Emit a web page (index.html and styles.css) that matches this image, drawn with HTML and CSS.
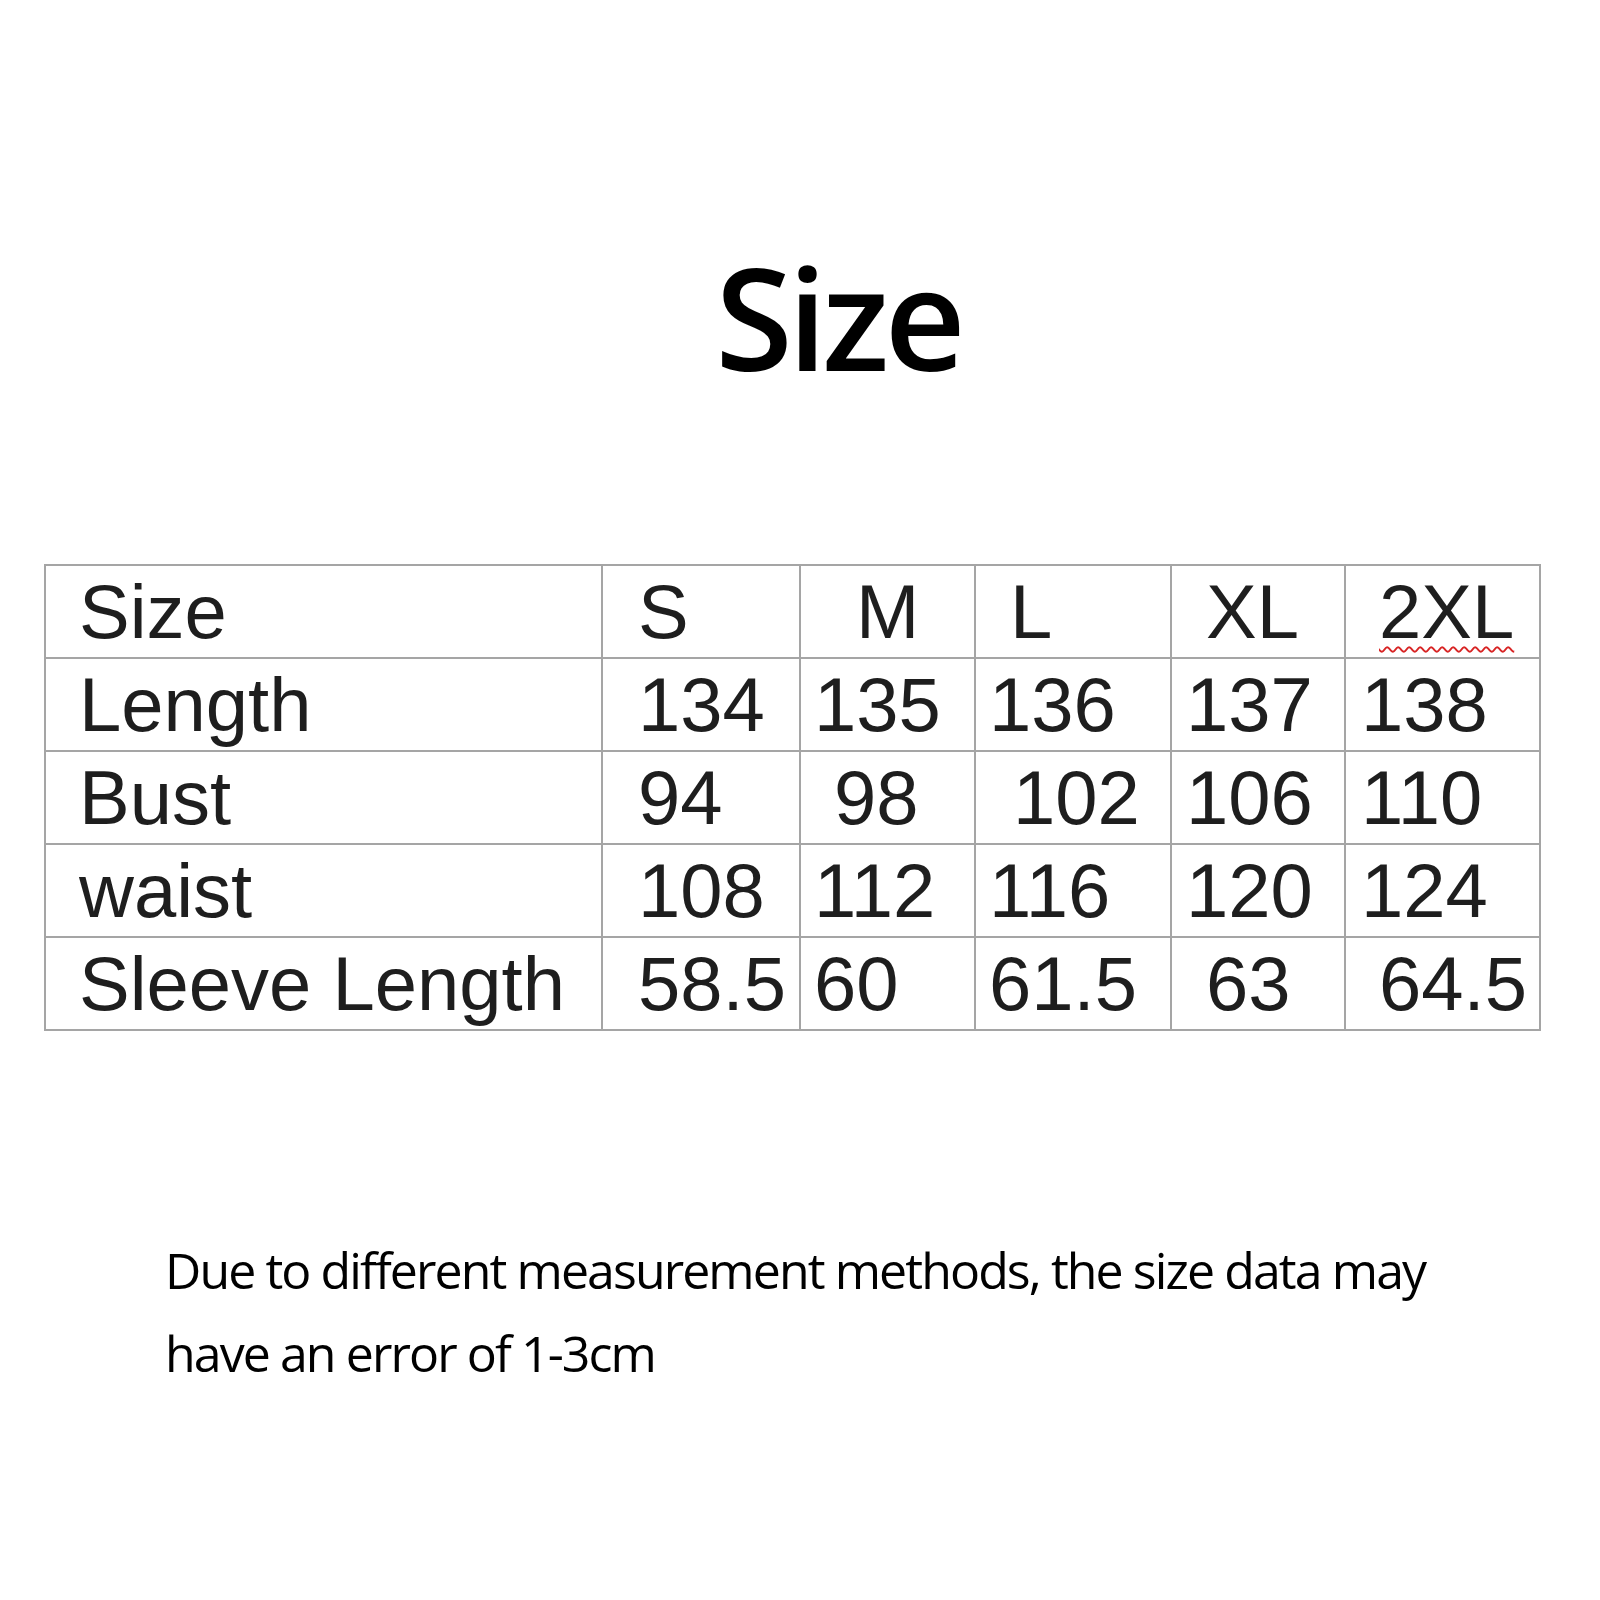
FILE: index.html
```html
<!DOCTYPE html>
<html>
<head>
<meta charset="utf-8">
<link rel="stylesheet" href="styles.css">
</head>
<body>
<div class="page">
  <h1 class="title">Size</h1>
  <table class="chart">
    <colgroup>
      <col class="c0"><col class="c1"><col class="c2"><col class="c3"><col class="c4"><col class="c5">
    </colgroup>
    <tr><td class="lab">Size</td><td class="s">S</td><td class="m in56">M</td><td class="l in35">L</td><td class="xl in35">XL</td><td class="xxl in34"><span class="spell">2XL</span></td></tr>
    <tr><td class="lab">Length</td><td class="s">134</td><td class="m">135</td><td class="l">136</td><td class="xl">137</td><td class="xxl">138</td></tr>
    <tr><td class="lab">Bust</td><td class="s">94</td><td class="m in34">98</td><td class="l in38">102</td><td class="xl">106</td><td class="xxl">110</td></tr>
    <tr><td class="lab">waist</td><td class="s">108</td><td class="m">112</td><td class="l">116</td><td class="xl">120</td><td class="xxl">124</td></tr>
    <tr><td class="lab">Sleeve Length</td><td class="s">58.5</td><td class="m">60</td><td class="l">61.5</td><td class="xl in35">63</td><td class="xxl in34">64.5</td></tr>
  </table>
  <p class="note">Due to different measurement methods, the size data may<br>have an error of 1-3cm</p>
</div>
</body>
</html>
```

FILE: styles.css
```css
html, body {
  margin: 0;
  padding: 0;
  background: #ffffff;
}
.page {
  width: 1600px;
  height: 1600px;
  position: relative;
  overflow: hidden;
}
.title {
  margin: 0;
  padding-top: 236px;
  padding-left: 76px;
  text-align: center;
  font-family: "Open Sans", "Noto Sans", sans-serif;
  font-weight: 600;
  font-size: 141px;
  line-height: 160px;
  color: #000;
  letter-spacing: -5px;
}
.chart {
  margin: 168px 0 0 44px;
  border-collapse: collapse;
  table-layout: fixed;
  width: 1495px;
  font-family: "Liberation Sans", Arial, sans-serif;
  font-size: 76px;
  color: #1e1e1e;
}
.c0 { width: 557px; }
.c1 { width: 198px; }
.c2 { width: 175px; }
.c3 { width: 196px; }
.c4 { width: 174px; }
.c5 { width: 195px; }
.chart td {
  border: 2px solid #a5a5a5;
  height: 91px;
  padding: 0;
  line-height: 91px;
  white-space: nowrap;
  overflow: visible;
  vertical-align: middle;
}
.lab { padding-left: 33px !important; }
.s { padding-left: 35px !important; }
.m { padding-left: 13px !important; }
.l { padding-left: 13px !important; }
.xl { padding-left: 14px !important; }
.xxl { padding-left: 15px !important; }
.m.in56 { padding-left: 55px !important; }
.m.in34 { padding-left: 33px !important; }
.l.in35 { padding-left: 34px !important; }
.l.in38 { padding-left: 37px !important; }
.xl.in35 { padding-left: 34px !important; }
.xxl.in34 { padding-left: 33px !important; }
.spell {
  text-decoration: underline wavy #d82424;
  text-decoration-thickness: 2px;
  text-underline-offset: 8px;
}
.note {
  margin: 198px 0 0 165px;
  font-family: "Open Sans", "Noto Sans", sans-serif;
  font-weight: 500;
  font-size: 50px;
  line-height: 83px;
  color: #000;
  letter-spacing: -1.9px;
}
```
